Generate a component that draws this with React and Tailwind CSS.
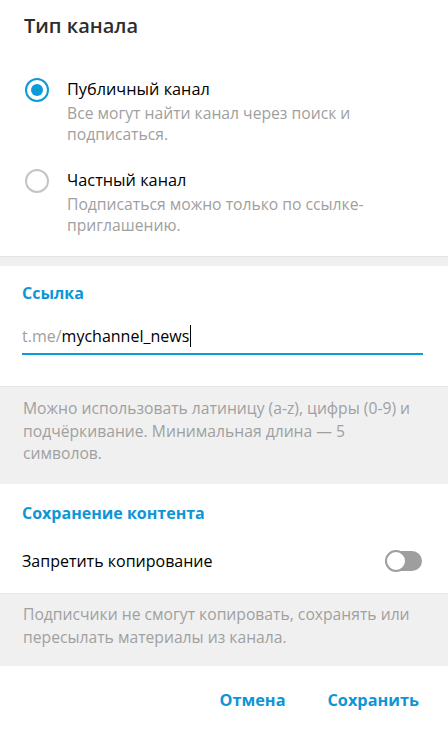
import React, { useState } from "react";

const BLUE = "text-[#0d96d6]";

const Radio = ({ checked }) =>
  checked ? (
    <span className="flex h-[24px] w-[24px] shrink-0 items-center justify-center rounded-full border-[2.5px] border-[#0d9ad9]">
      <span className="block h-[12px] w-[12px] rounded-full bg-[#0d9ad9]" />
    </span>
  ) : (
    <span className="block h-[24px] w-[24px] shrink-0 rounded-full border-[2px] border-[#c4c4c4]" />
  );

const Option = ({ checked, label, desc, className }) => (
  <div className={`flex gap-[18px] pl-[25px] pr-[20px] ${className}`}>
    <div>
      <Radio checked={checked} />
    </div>
    <div>
      <div className="text-[16.3px] leading-[22px] text-black">{label}</div>
      <div className="mt-[3px] text-[15.7px] leading-[21px] text-[#a0a0a0]">
        {desc}
      </div>
    </div>
  </div>
);

export default function App() {
  const [type, setType] = useState("public");
  const [noCopy, setNoCopy] = useState(false);

  return (
    <div className="h-[730px] w-[448px] bg-white font-['Open_Sans',sans-serif]">
      <div className="pb-[20px] pt-[13px]">
        <div className="px-[24px] text-[20px] font-semibold leading-[26px] text-[#2d2d2d]">
          Тип канала
        </div>
        <div onClick={() => setType("public")}>
          <Option
            className="mt-[39px]"
            checked={type === "public"}
            label="Публичный канал"
            desc={
              <>
                Все могут найти канал через поиск и
                <br />
                подписаться.
              </>
            }
          />
        </div>
        <div onClick={() => setType("private")}>
          <Option
            className="mt-[24px]"
            checked={type === "private"}
            label="Частный канал"
            desc={
              <>
                Подписаться можно только по ссылке-
                <br />
                приглашению.
              </>
            }
          />
        </div>
      </div>

      <div className="h-[10px] border-t border-[#e3e3e3] bg-[#f0f0f0]" />

      <div className="pb-[31px] pl-[22px] pr-[25px] pt-[16px]">
        <div className={`text-[16px] font-bold leading-[22px] ${BLUE}`}>
          Ссылка
        </div>
        <div className="mt-[20px] flex items-center border-b-2 border-[#0d9ad9] pb-[5px] text-[16px] leading-[24px]">
          <span className="text-[#a0a0a0]">t.me/</span>
          <span className="text-black">mychannel_news</span>
          <span className="ml-[1px] h-[22px] w-[1px] bg-black" />
        </div>
      </div>

      <div className="border-t border-[#e6e6e6] bg-[#f0f0f0] px-[23px] pb-[19px] pt-[10px] text-[15.7px] leading-[22.5px] text-[#a0a0a0]">
        Можно использовать латиницу (a-z), цифры (0-9) и
        <br />
        подчёркивание. Минимальная длина — 5
        <br />
        символов.
      </div>

      <div className="px-[22px] pb-[21px] pt-[18px]">
        <div className={`text-[16px] font-bold leading-[22px] ${BLUE}`}>
          Сохранение контента
        </div>
        <div className="mt-[26px] flex items-center justify-between">
          <span className="text-[16px] leading-[22px] text-black">
            Запретить копирование
          </span>
          <button
            onClick={() => setNoCopy(!noCopy)}
            className="relative mr-[4px] h-[20px] w-[36px] rounded-full bg-[#9e9e9e]"
          >
            <span className="absolute left-[-1px] top-[-1px] h-[22px] w-[22px] rounded-full border-2 border-[#9e9e9e] bg-white" />
          </button>
        </div>
      </div>

      <div className="border-t border-[#e6e6e6] bg-[#f0f0f0] px-[23px] pb-[17px] pt-[9px] text-[15.7px] leading-[23px] text-[#a0a0a0]">
        Подписчики не смогут копировать, сохранять или
        <br />
        пересылать материалы из канала.
      </div>

      <div className="flex justify-end gap-[42px] pr-[29px] pt-[23px]">
        <button className={`text-[16.3px] font-bold leading-[22px] ${BLUE}`}>
          Отмена
        </button>
        <button className={`text-[16.3px] font-bold leading-[22px] ${BLUE}`}>
          Сохранить
        </button>
      </div>
    </div>
  );
}
